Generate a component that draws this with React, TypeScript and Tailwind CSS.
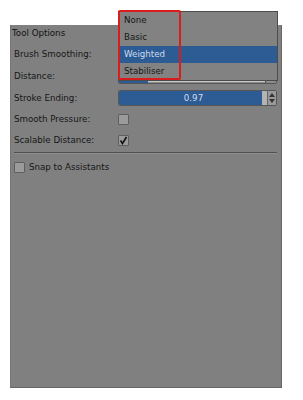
const font = { fontFamily: '"DejaVu Sans", Verdana, sans-serif' };

function Checkbox({ checked }: { checked?: boolean }) {
  return (
    <div className="w-[11px] h-[11px] bg-[#9b9b9b] border border-[#5e5e5e] rounded-[1px] flex items-center justify-center">
      {checked && (
        <svg width="9" height="9" viewBox="0 0 9 9">
          <path d="M1.5 4.5 L3.5 7.5 L7.5 1" stroke="#111" strokeWidth="1.6" fill="none" />
        </svg>
      )}
    </div>
  );
}

function Row({ label, children, h = "h-[22px]" }: { label: string; children?: React.ReactNode; h?: string }) {
  return (
    <div className={`flex items-center ${h}`}>
      <div className="w-[107px] pl-[3px] text-[#161616]">{label}</div>
      <div className="w-[159px] flex items-center">{children}</div>
    </div>
  );
}

export default function App() {
  const items = ["None", "Basic", "Weighted", "Stabiliser"];
  return (
    <div className="relative w-[303px] h-[400px] bg-white text-[8.7px] leading-[11px]" style={font}>
      <div className="absolute left-[10px] top-[25px] w-[272px] h-[363px] bg-[#808080] border-r border-b border-[#666] border-l-[#757575] border-l">
        <div className="h-[14px] pt-[1px] pl-[1px] leading-[14px] text-[#111]">Tool Options</div>
        <div className="mt-[4px]">
          <Row label="Brush Smoothing:">
            <div className="w-[159px] h-[16px] bg-[#8a8a8a] border border-[#555] rounded-[2px]" />
          </Row>
          <Row label="Distance:">
            <div className="relative w-[159px] h-[15px] bg-[#8c8c8c] border border-[#555] rounded-[2px] overflow-hidden">
              <div className="absolute left-0 top-0 bottom-0 w-[29px] bg-[#2d5b93]" />
              <div className="absolute left-[29px] right-[10px] bottom-[1px] h-[1px] bg-[#c8c8c8]" />
              <div className="absolute right-[10px] bottom-0 w-[1px] h-[3px] bg-[#555]" />
            </div>
          </Row>
          <Row label="Stroke Ending:">
            <div className="w-[159px] h-[16px] flex border border-[#555] rounded-[2px] overflow-hidden bg-[#a8a8a8]">
              <div className="w-[143px] bg-[#2d5b93] text-[#cfdcec] flex items-center justify-center pl-[6px]">0.97</div>
              <div className="w-[5px] bg-[#b4b4b4]" />
              <div className="flex-1 flex flex-col items-center justify-center gap-[2px] bg-[#9a9a9a] border-l border-[#666]">
                <svg width="6" height="4" viewBox="0 0 6 4"><path d="M0 4 L3 0 L6 4 Z" fill="#333" /></svg>
                <svg width="6" height="4" viewBox="0 0 6 4"><path d="M0 0 L3 4 L6 0 Z" fill="#333" /></svg>
              </div>
            </div>
          </Row>
          <Row label="Smooth Pressure:" h="h-[21px]">
            <Checkbox />
          </Row>
          <Row label="Scalable Distance:" h="h-[21px]">
            <Checkbox checked />
          </Row>
        </div>
        <div className="ml-[3px] mr-[4px] mt-[1px] border-t border-[#4f4f4f] border-b border-b-[#8e8e8e]" />
        <div className="flex items-center h-[26px] pl-[3px] gap-[4px] text-[#161616]">
          <Checkbox />
          <span>Snap to Assistants</span>
        </div>
      </div>

      <div className="absolute left-[118px] top-[11px] w-[160px] h-[70px] bg-[#828282] border border-[#4c4c4c]">
        {items.map((it) => (
          <div
            key={it}
            className={`h-[17px] flex items-center pl-[5px] ${it === "Weighted" ? "bg-[#2d5b93] text-[#cfdcec]" : "text-[#161616]"}`}
          >
            {it}
          </div>
        ))}
      </div>

      <div className="absolute left-[118px] top-[10px] w-[63px] h-[70px] border-2 border-[#d91c1c] rounded-[2px]" />
    </div>
  );
}
